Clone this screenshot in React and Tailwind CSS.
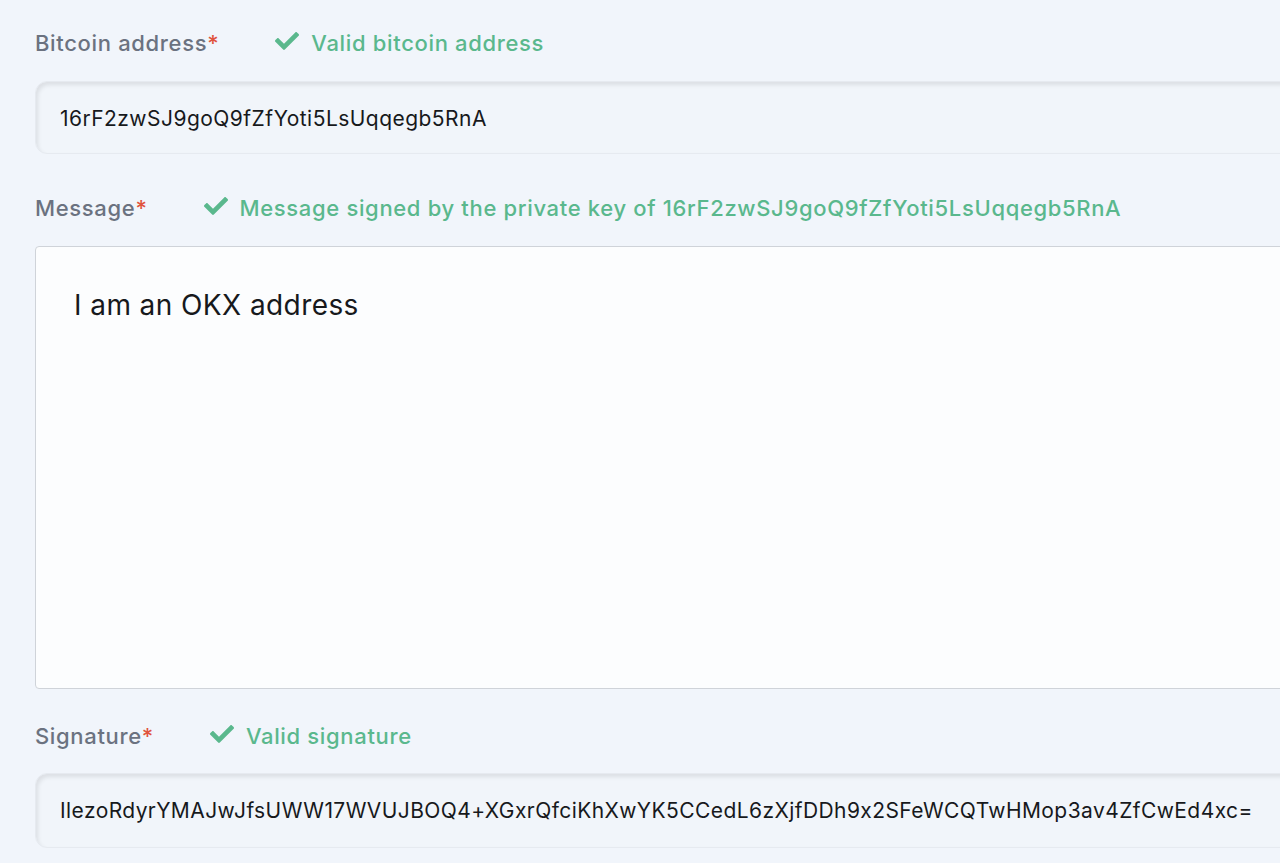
import React from 'react';
import { FaCheck } from 'react-icons/fa';

const Field = ({ label, status, children, className }) => (
  <div className={className}>
    <div className="flex items-center h-[28px]">
      <span className="text-[22px] font-medium tracking-[0.03em] text-[#6b7280]">
        {label}
        <span className="text-[#e0533d]">*</span>
      </span>
      <span className="ml-[56px] flex items-center gap-3 text-[22px] font-medium tracking-[0.03em] text-[#5ab88d]">
        <FaCheck className="w-[24px] h-[24px] -mt-[5px]" />
        {status}
      </span>
    </div>
    {children}
  </div>
);

const App = () => {
  const address = '16rF2zwSJ9goQ9fZfYoti5LsUqqegb5RnA';

  return (
    <div
      className="w-[1280px] h-[863px] overflow-hidden bg-[#f1f5fb] pl-[35px] pt-[29px] [font-feature-settings:'calt'_0]"
      style={{ fontFamily: 'Inter, "Noto Sans", sans-serif' }}
    >
      <Field label="Bitcoin address" status="Valid bitcoin address">
        <div className="mt-[24px] w-[1320px] h-[73px] rounded-[12px] border border-[#e6eaf0] bg-[#f1f5fa] shadow-[inset_2px_3px_4px_rgba(0,0,0,0.09)] flex items-center pl-[24px] pt-[2px] text-[21px] tracking-[0.022em] text-[#17191c]">
          {address}
        </div>
      </Field>

      <Field className="mt-[40px]" label="Message" status={`Message signed by the private key of ${address}`}>
        <div className="mt-[24px] w-[1320px] h-[443px] rounded-[4px] border border-[#cfd3d9] bg-[#fcfdfe] pl-[38px] pt-[37px] text-[28px] tracking-[0.015em] text-[#17191c]">
          I am an OKX address
        </div>
      </Field>

      <Field className="mt-[33px]" label="Signature" status="Valid signature">
        <div className="mt-[23px] w-[1320px] h-[75px] rounded-[12px] border border-[#e6eaf0] bg-[#f1f5fa] shadow-[inset_2px_3px_4px_rgba(0,0,0,0.09)] flex items-center pl-[24px] text-[21px] tracking-[0.02em] text-[#17191c]">
          IlezoRdyrYMAJwJfsUWW17WVUJBOQ4+XGxrQfciKhXwYK5CCedL6zXjfDDh9x2SFeWCQTwHMop3av4ZfCwEd4xc=
        </div>
      </Field>
    </div>
  );
};

export default App;
